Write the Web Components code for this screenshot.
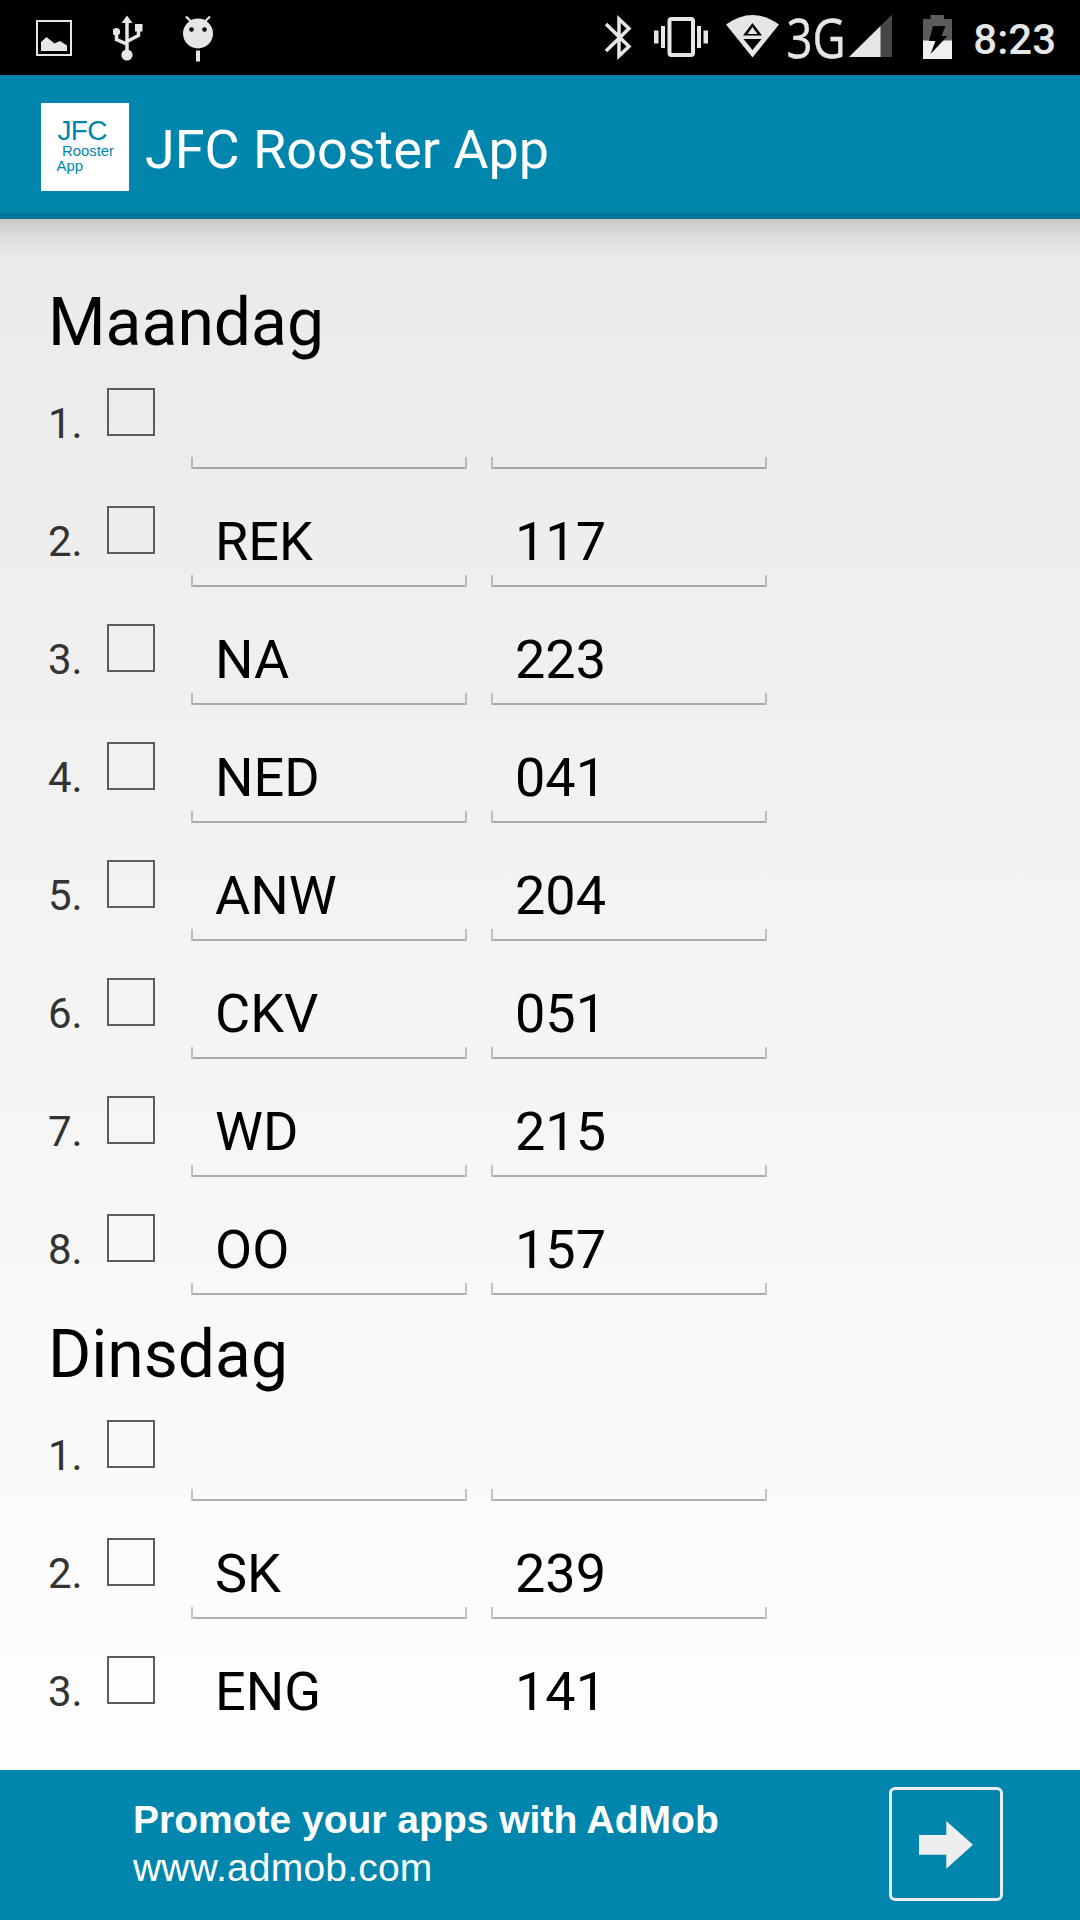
<!DOCTYPE html>
<html lang="nl">
<head>
<meta charset="utf-8">
<title>JFC Rooster App</title>
<style>
body{margin:0;font-family:Roboto,"Noto Sans",sans-serif;background:#fff}
</style>
</head>
<body>
<rooster-screen></rooster-screen>
<script>
const define = (name, html, setup) => customElements.define(name, class extends HTMLElement {
  connectedCallback() {
    if (this.shadowRoot) return;
    const root = this.attachShadow({mode: 'open'});
    root.innerHTML = html;
    if (setup) setup(this, root);
  }
});

define('status-bar', `
<style>
:host{display:flex;height:75px;background:#000;color:#e6e6e6;box-sizing:border-box;justify-content:space-between}
div{display:flex;height:75px}
svg{display:block;height:75px;flex:none}
.left{padding-left:36px;gap:41px}
.left svg+svg+svg{margin-left:-1px}
.time{box-sizing:border-box;height:75px;margin-left:18px;padding:3px 24px 0 0;font:500 42px/73px Roboto,sans-serif}
</style>
<div class="left">
<svg width="36" viewBox="36 0 36 75"><path d="M37 21h34v34h-34z" fill="none" stroke="#e6e6e6" stroke-width="2"/><path d="M41 51v-9l5.500-5 8 6.500 5.500-2.500 7 4.500v5.500z" fill="#e6e6e6"/></svg>
<svg width="30" viewBox="113 0 30 75"><g fill="none" stroke="#e6e6e6" stroke-width="3.500"><path d="M127 20v36M116.500 33v6.500l10.500 4.700M138.500 30v5.500l-11.500 6"/></g><g fill="#e6e6e6"><path d="M121.500 23l5.500-7.500 5.500 7.500zM135 24h7.500v7.500h-7.500z"/><circle cx="116.300" cy="31.800" r="3.800"/><circle cx="127" cy="55" r="5.600"/></g></svg>
<svg width="30" viewBox="183 0 30 75"><circle cx="198" cy="33.500" r="15" fill="#e6e6e6"/><path d="M186 16.500l5 5M210 16.500l-5 5" stroke="#e6e6e6" stroke-width="2.200"/><path d="M196 50.500h4v11h-4z" fill="#e6e6e6"/><circle cx="191.500" cy="29.500" r="2.300"/><circle cx="204.500" cy="29.500" r="2.300"/></svg>
</div>
<div>
<svg width="350" viewBox="605 0 350 75">
 <path d="M606 24l23 22.500-10 9.500v-37l10 9.500-23 22.500" fill="none" stroke="#e6e6e6" stroke-width="3.500"/>
 <rect x="669.500" y="19" width="23.500" height="36" rx="2" fill="none" stroke="#e6e6e6" stroke-width="4"/>
 <path d="M654 30.500h4.500v13h-4.500zM661 26h4v22h-4zM697 26h4v22h-4zM703.500 30.500h4.500v13h-4.500z" fill="#e6e6e6"/>
 <path d="M726 24.500q26.500-19 53 0l-26.500 33z" fill="#e6e6e6"/>
 <path d="M743 35.500l9.500-12.500 9.500 12.500zM743.500 39h18l-9 11z" fill="#000"/><path d="M747.500 34l5-7 5 7z" fill="#e6e6e6"/>
 <text x="786.500" y="58" font-family="Open Sans,Noto Sans,sans-serif" font-size="55" textLength="59" lengthAdjust="spacingAndGlyphs" fill="#e6e6e6" stroke="#e6e6e6" stroke-width=".5">3G</text>
 <path d="M849 57l43-42.500v42.500z" fill="#464646"/><path d="M849 57l31.500-31v31z" fill="#e6e6e6"/>
 <path d="M923 41v-22h7.500v-4h13.500v4h8v22z" fill="#5c5c5c"/><path d="M923 40.500h29v18.500h-29z" fill="#f0f0f0"/><path d="M933 26h12.500l-4 10h6l-17 18 5-13h-6.500z" fill="#000"/>
</svg>
<span class="time">8:23</span>
</div>`);

define('app-bar', `
<style>
:host{display:flex;box-sizing:border-box;height:144px;padding:28px 0 0 41px;background:#0085ad;border-bottom:6px solid #00749a;color:#fff;gap:16px}
svg{display:block;flex:none}
h1{margin:0;font-weight:400;font-size:54px;line-height:88px;padding-top:3px;white-space:nowrap;letter-spacing:-.05px}
</style>
<svg width="88" height="88" viewBox="41 103 88 88" font-family="Liberation Sans,Arial,sans-serif" fill="#0085ad"><path d="M41 103h88v88h-88z" fill="#fff"/><text x="57.500" y="140" font-size="28" textLength="50">JFC</text><text x="62" y="156" font-size="15" textLength="52" lengthAdjust="spacingAndGlyphs">Rooster</text><text x="56.500" y="171" font-size="15" textLength="26.500" lengthAdjust="spacingAndGlyphs">App</text></svg>
<h1><slot></slot></h1>`);

define('text-field', `
<style>
:host{display:block;box-sizing:border-box;width:276px;height:118px;padding:27px 24px 0;font-size:54px;line-height:64px;color:#000;white-space:nowrap;
background:linear-gradient(rgba(0,0,0,.3),rgba(0,0,0,.3)) 2px 102px/272px 2px no-repeat,
linear-gradient(rgba(0,0,0,.22),rgba(0,0,0,.22)) 0 92px/2px 12px no-repeat,
linear-gradient(rgba(0,0,0,.22),rgba(0,0,0,.22)) 274px 92px/2px 12px no-repeat}
</style><slot></slot>`);

define('check-box', `<style>:host{display:block;box-sizing:border-box;width:48px;height:48px;border:2px solid #5c5c5c}</style>`);

define('lesson-row', `
<style>
:host{display:flex;height:118px}
.nr{width:59px;padding-top:34px;font-size:42px;line-height:49px;color:#333}
check-box{margin:23px 36px 0 0}
text-field+text-field{margin-left:24px}
</style>
<span class="nr"></span><check-box></check-box><text-field class="subject"></text-field><text-field class="room"></text-field>`,
(el, root) => {
  root.querySelector('.nr').textContent = el.getAttribute('nr') + '.';
  root.querySelector('.subject').textContent = el.getAttribute('subject') || '';
  root.querySelector('.room').textContent = el.getAttribute('room') || '';
});

define('day-section', `
<style>
:host{display:block}
h2{margin:0;box-sizing:border-box;height:88px;padding-top:3px;font-weight:400;font-size:66px;line-height:86px;color:#000}
</style><h2></h2><slot></slot>`,
(el, root) => { root.querySelector('h2').textContent = el.getAttribute('name'); });

define('ad-banner', `
<style>
:host{display:flex;box-sizing:border-box;height:150px;background:#0085ad;color:#fff;padding:17px 77px 0 133px;justify-content:space-between;font-family:"Liberation Sans",Arial,sans-serif;font-size:39px;line-height:48px;white-space:nowrap}
.copy{padding-top:9px}
b,span{display:block}
span{letter-spacing:.2px}
.go{box-sizing:border-box;width:114px;height:114px;border:3px solid #eee;border-radius:6px}
svg{display:block}
</style>
<div class="copy"><b>Promote your apps with AdMob</b><span>www.admob.com</span></div>
<div class="go"><svg width="108" height="108" viewBox="892 1790 108 108"><path d="M919 1835h27.300v-14l26.700 23.800-26.700 24v-14h-27.300z" fill="#eee"/></svg></div>`);

define('rooster-screen', `
<style>
:host{display:flex;flex-direction:column;width:1080px;height:1920px;overflow:hidden}
main{flex:1;min-height:0;box-sizing:border-box;padding:0 48px 48px;background:
linear-gradient(rgba(0,0,0,.15),rgba(0,0,0,.15)) 0 0/100% 3px no-repeat,
linear-gradient(rgba(0,0,0,.12),rgba(0,0,0,.05) 45%,rgba(0,0,0,0)) 0 3px/100% 36px no-repeat,
linear-gradient(#eaeaea,#fefefe)}
.list{height:100%;overflow:hidden;box-sizing:border-box;padding-top:58px}
</style>
<status-bar></status-bar>
<app-bar>JFC Rooster App</app-bar>
<main><div class="list"></div></main>
<ad-banner></ad-banner>`,
(el, root) => {
  const days = {
    Maandag: [['',''],['REK','117'],['NA','223'],['NED','041'],['ANW','204'],['CKV','051'],['WD','215'],['OO','157']],
    Dinsdag: [['',''],['SK','239'],['ENG','141']]
  };
  root.querySelector('.list').innerHTML = Object.entries(days).map(([day, rows]) =>
    `<day-section name="${day}">${rows.map(([s, r], i) => `<lesson-row nr="${i + 1}" subject="${s}" room="${r}"></lesson-row>`).join('')}</day-section>`).join('');
});
</script>
</body>
</html>
